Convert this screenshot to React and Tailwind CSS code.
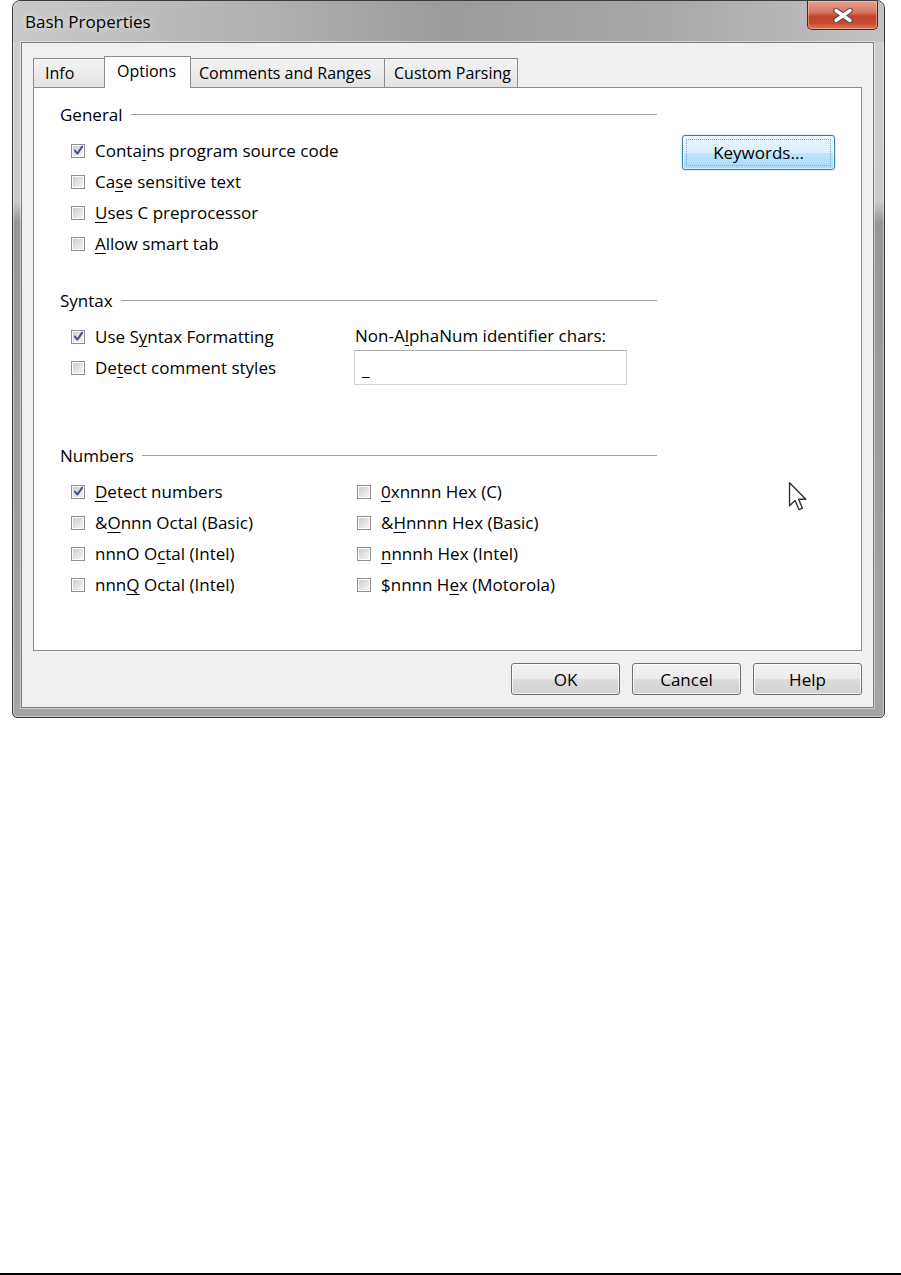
import React from "react";

function Check({ checked }) {
  return (
    <span className="flex h-[14px] w-[14px] shrink-0 border border-[#8e8f8f] bg-white p-px">
      <span className="flex h-full w-full items-center justify-center bg-[linear-gradient(135deg,#cbced2,#f5f5f5)]">
        {checked && (
          <svg width="11" height="11" viewBox="0 0 11 11" className="overflow-visible">
            <path d="M2 5.6 L4.4 8.6 L9.2 1.6" fill="none" stroke="#3f4f86" strokeWidth="1.9" strokeLinecap="round" strokeLinejoin="round" />
          </svg>
        )}
      </span>
    </span>
  );
}

function Row({ checked, children }) {
  return (
    <div className="flex h-[31px] items-center gap-[10px]">
      <Check checked={checked} />
      <span className="whitespace-nowrap">{children}</span>
    </div>
  );
}

function Group({ title }) {
  return (
    <div className="flex h-[20px] items-center gap-[8px]">
      <span>{title}</span>
      <div className="h-px flex-1 bg-[#a3a3a3]" />
    </div>
  );
}

function U({ children }) {
  return <u className="decoration-1 underline-offset-[3px]">{children}</u>;
}

function DlgButton({ children }) {
  return (
    <button className="flex h-[32px] w-[109px] items-center justify-center rounded-[3px] border border-[#707070] bg-[linear-gradient(180deg,#f2f2f2_0%,#ebebeb_50%,#dddddd_51%,#cfcfcf_100%)] shadow-[inset_0_0_0_1px_rgba(255,255,255,0.7)]">
      {children}
    </button>
  );
}

function CloseButton() {
  return (
    <div className="-mr-[2px] flex h-[29px] w-[71px] items-center justify-center rounded-b-[5px] border border-t-0 border-[#5b2117] bg-[linear-gradient(180deg,#e8a394_0%,#d8745f_40%,#c3432b_55%,#c94a31_80%,#dc7a5f_100%)] shadow-[inset_0_0_0_1px_rgba(255,210,200,0.45)]">
      <svg width="22" height="15" viewBox="0 0 22 15">
        <path d="M4 2.5 L18 12.5 M18 2.5 L4 12.5" stroke="#4a4a4a" strokeWidth="5.4" strokeLinecap="round" />
        <path d="M4 2.5 L18 12.5 M18 2.5 L4 12.5" stroke="#ffffff" strokeWidth="3.4" strokeLinecap="round" />
      </svg>
    </div>
  );
}

function Tab({ children, className }) {
  return (
    <div className={"flex h-[29px] items-center whitespace-nowrap border border-b-0 border-[#898c95] bg-[linear-gradient(180deg,#f4f4f4,#e2e2e2)] text-[16px] " + className}>
      {children}
    </div>
  );
}

export default function App() {
  return (
    <div className="flex h-[1275px] w-[901px] flex-col bg-white font-['Open_Sans','Noto_Sans',sans-serif] text-[17px] leading-none text-black">
      <div className="ml-[12px] flex h-[718px] w-[873px] flex-col rounded-t-[8px] rounded-b-[5px] border border-[#3a3a3a] bg-[linear-gradient(180deg,#cdcdcd_0%,#cbcbcb_28%,#979797_31%,#a4a4a4_100%)] pb-[9px] pl-[8px] pr-[10px] shadow-[inset_0_0_0_1px_rgba(255,255,255,0.4)]">
        {/* title bar */}
        <div className="-ml-[8px] -mr-[10px] flex h-[41px] shrink-0 items-start justify-between rounded-t-[7px] bg-[linear-gradient(90deg,#c9c9c9_0%,#b4b4b4_25%,#9c9c9c_50%,#a8a8a8_75%,#c2c2c2_100%)] pl-[12px] pr-[8px]">
          <span className="pt-[12px] [text-shadow:0_0_6px_rgba(255,255,255,0.9)]">Bash Properties</span>
          <CloseButton />
        </div>

        {/* client area */}
        <div className="flex flex-1 flex-col border border-[#7d7d7d] bg-[#f0f0f0] px-[11px] pb-[12px] pt-[13px] shadow-[0_0_0_1px_rgba(255,255,255,0.45)]">
          <div className="flex h-[31px] items-end">
            <Tab className="w-[71px] border-r-0 pl-[11px]">Info</Tab>
            <div className="relative z-10 -mb-px flex h-[32px] w-[87px] items-center whitespace-nowrap border border-b-0 border-[#898c95] bg-white pb-[4px] pl-[12px] text-[16px]">
              Options
            </div>
            <Tab className="w-[194px] border-l-0 pl-[8px]">Comments and Ranges</Tab>
            <Tab className="w-[133px] border-l-0 pl-[9px]">Custom Parsing</Tab>
          </div>

          <div className="relative flex h-[564px] border border-[#898c95] bg-white pl-[26px]">
            <div className="flex w-[597px] flex-col pt-[16px]">
              <Group title="General" />
              <div className="mt-[11px] flex flex-col pl-[11px]">
                <Row checked>Conta<U>i</U>ns program source code</Row>
                <Row>Ca<U>s</U>e sensitive text</Row>
                <Row><U>U</U>ses C preprocessor</Row>
                <Row><U>A</U>llow smart tab</Row>
              </div>

              <div className="mt-[31px]">
                <Group title="Syntax" />
              </div>
              <div className="mt-[11px] flex pl-[11px]">
                <div className="flex w-[283px] flex-col">
                  <Row checked>Use S<U>y</U>ntax Formatting</Row>
                  <Row>De<U>t</U>ect comment styles</Row>
                </div>
                <div className="flex flex-col">
                  <div className="flex h-[29px] items-center pl-px">
                    Non-A<U>l</U>phaNum identifier chars:
                  </div>
                  <div className="flex h-[35px] w-[273px] items-center border border-[#cfd2d8] border-t-[#abadb3] bg-white pl-[7px] pt-[4px]">
                    _
                  </div>
                </div>
              </div>

              <div className="mt-[60px]">
                <Group title="Numbers" />
              </div>
              <div className="mt-[11px] grid grid-cols-[286px_1fr] pl-[11px]">
                <Row checked><U>D</U>etect numbers</Row>
                <Row><U>0</U>xnnnn Hex (C)</Row>
                <Row>&amp;<U>O</U>nnn Octal (Basic)</Row>
                <Row>&amp;<U>H</U>nnnn Hex (Basic)</Row>
                <Row>nnnO O<U>c</U>tal (Intel)</Row>
                <Row><U>n</U>nnnh Hex (Intel)</Row>
                <Row>nnn<U>Q</U> Octal (Intel)</Row>
                <Row>$nnnn H<U>e</U>x (Motorola)</Row>
              </div>
            </div>

            <div className="ml-[25px] mt-[47px]">
              <button className="relative flex h-[35px] w-[153px] items-center justify-center rounded-[3px] border border-[#3c7fb1] bg-[linear-gradient(180deg,#eaf6fd_0%,#d9f0fc_50%,#bee6fd_51%,#a7d9f5_100%)] shadow-[0_0_2px_#7cc4ec,inset_0_0_0_1px_rgba(255,255,255,0.6)]">
                <span className="absolute inset-[3px] border border-dotted border-[#7aa9c9]" />
                <span className="relative">Keywords...</span>
              </button>
            </div>

            {/* mouse pointer */}
            <svg className="absolute left-[754px] top-[393px]" width="20" height="31" viewBox="0 0 13 20">
              <path d="M1 1 L1 16 L4.6 12.6 L7.2 18.6 L9.4 17.6 L6.9 11.8 L11.6 11.8 Z" fill="#ffffff" stroke="#2f3138" strokeWidth="0.9" strokeLinejoin="round" />
            </svg>
          </div>

          <div className="mt-[12px] flex justify-end gap-[12px]">
            <DlgButton>OK</DlgButton>
            <DlgButton>Cancel</DlgButton>
            <DlgButton>Help</DlgButton>
          </div>
        </div>
      </div>
      <div className="mt-auto h-[2px] bg-black" />
    </div>
  );
}
